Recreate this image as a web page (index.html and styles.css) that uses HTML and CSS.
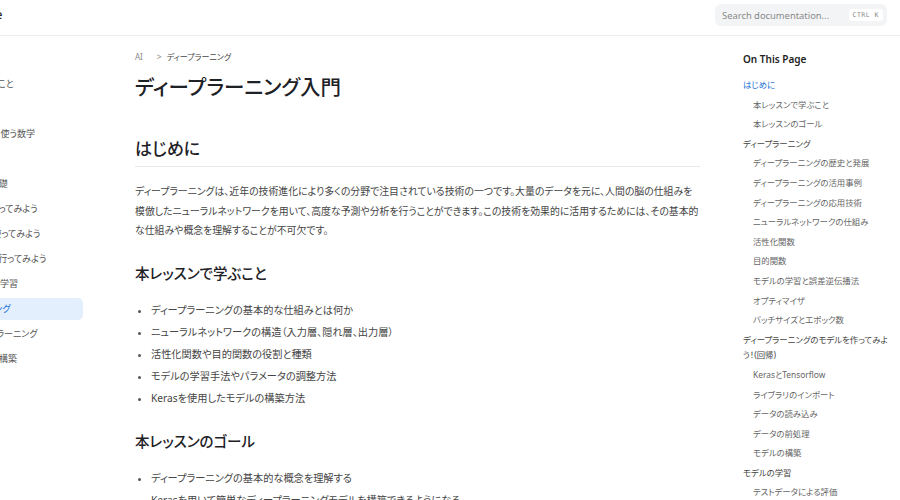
FILE: index.html
```html
<!DOCTYPE html>
<html lang="ja">
<head>
    <meta charset="UTF-8">
    <meta name="viewport" content="width=device-width, initial-scale=1.0">
    <title>ディープラーニング入門</title>
    <link rel="stylesheet" href="styles.css">
</head>
<body>
    <div class="page">
        <header class="topbar">
            <div class="brand">AI Note</div>
            <div class="search">
                <span class="search_text">Search documentation...</span>
                <kbd class="search_kbd">CTRL K</kbd>
            </div>
        </header>

        <div class="layout">
            <!-- Lesson list -->
            <nav class="sidebar">
                <a class="sidebar_item">はじめに</a>
                <a class="sidebar_item">本コースで学ぶこと</a>
                <a class="sidebar_item">AIとは</a>
                <a class="sidebar_item">機械学習で、よく使う数学</a>
                <a class="sidebar_item">Python入門</a>
                <a class="sidebar_item">データ分析の基礎</a>
                <a class="sidebar_item">Matplotlibを使ってみよう</a>
                <a class="sidebar_item">scikit-learnを使ってみよう</a>
                <a class="sidebar_item">データの分類を行ってみよう</a>
                <a class="sidebar_item">強化学習と深層学習</a>
                <a class="sidebar_item active">ディープラーニング</a>
                <a class="sidebar_item">実践的ディープラーニング</a>
                <a class="sidebar_item">生成AIモデルの構築</a>
                <a class="sidebar_item">まとめ</a>
            </nav>

            <main class="content">
                <div class="breadcrumb">
                    <span class="crumb">AI</span>
                    <span class="crumb_sep">&gt;</span>
                    <span class="crumb current">ディープラーニング</span>
                </div>
                <h1 class="title">ディープラーニング入門</h1>

                <h2 class="section_title">はじめに</h2>
                <p class="text">ディープラーニングは、近年の技術進化により多くの分野で注目されている技術の一つです。大量のデータを元に、人間の脳の仕組みを模倣したニューラルネットワークを用いて、高度な予測や分析を行うことができます。この技術を効果的に活用するためには、その基本的な仕組みや概念を理解することが不可欠です。</p>

                <h3 class="sub_title">本レッスンで学ぶこと</h3>
                <ul class="list">
                    <li>ディープラーニングの基本的な仕組みとは何か</li>
                    <li>ニューラルネットワークの構造（入力層、隠れ層、出力層）</li>
                    <li>活性化関数や目的関数の役割と種類</li>
                    <li>モデルの学習手法やパラメータの調整方法</li>
                    <li>Kerasを使用したモデルの構築方法</li>
                </ul>

                <h3 class="sub_title">本レッスンのゴール</h3>
                <ul class="list">
                    <li>ディープラーニングの基本的な概念を理解する</li>
                    <li>Kerasを用いて簡単なディープラーニングモデルを構築できるようになる</li>
                    <li>モデルの学習結果を評価し、改善する方法を身につける</li>
                </ul>
            </main>

            <!-- On this page -->
            <aside class="toc">
                <div class="toc_title">On This Page</div>
                <a class="toc_item active">はじめに</a>
                <a class="toc_item sub">本レッスンで学ぶこと</a>
                <a class="toc_item sub">本レッスンのゴール</a>
                <a class="toc_item">ディープラーニング</a>
                <a class="toc_item sub">ディープラーニングの歴史と発展</a>
                <a class="toc_item sub">ディープラーニングの活用事例</a>
                <a class="toc_item sub">ディープラーニングの応用技術</a>
                <a class="toc_item sub">ニューラルネットワークの仕組み</a>
                <a class="toc_item sub">活性化関数</a>
                <a class="toc_item sub">目的関数</a>
                <a class="toc_item sub">モデルの学習と誤差逆伝播法</a>
                <a class="toc_item sub">オプティマイザ</a>
                <a class="toc_item sub">バッチサイズとエポック数</a>
                <a class="toc_item">ディープラーニングのモデルを作ってみよう！(回帰)</a>
                <a class="toc_item sub">KerasとTensorflow</a>
                <a class="toc_item sub">ライブラリのインポート</a>
                <a class="toc_item sub">データの読み込み</a>
                <a class="toc_item sub">データの前処理</a>
                <a class="toc_item sub">モデルの構築</a>
                <a class="toc_item">モデルの学習</a>
                <a class="toc_item sub">テストデータによる評価</a>
            </aside>
        </div>
    </div>
</body>
</html>
```

FILE: styles.css
```css
html,
body {
    margin: 0;
    overflow: hidden;
}

body {
    font-family: 'Noto Sans', 'Noto Sans CJK JP', sans-serif;
    color: #333;
    background: #fff;
    font-feature-settings: "palt";
}

.page {
    width: 984px;
    margin-left: -84px;
}

/* Top bar */
.topbar {
    height: 36px;
    box-sizing: border-box;
    border-bottom: 1px solid #ececec;
    display: flex;
    justify-content: space-between;
    align-items: flex-start;
    padding: 4px 13px 0 43px;
}

.brand {
    font-size: 12px;
    font-weight: 500;
    line-height: 22px;
    color: #222;
}

.search {
    width: 172px;
    height: 22px;
    box-sizing: border-box;
    background: #f3f4f6;
    border-radius: 6px;
    display: flex;
    align-items: center;
    justify-content: space-between;
    padding: 0 4px 0 7px;
}

.search_text {
    font-size: 9.4px;
    color: #8a8a8a;
}

.search_kbd {
    font-family: 'DejaVu Sans Mono', monospace;
    font-size: 6.5px;
    color: #888;
    background: #fff;
    border-radius: 3px;
    padding: 2px 4px;
    letter-spacing: 0.5px;
}

/* Three columns */
.layout {
    display: grid;
    grid-template-columns: 167px 660px 157px;
}

.sidebar {
    display: flex;
    flex-direction: column;
    gap: 3px;
    padding: 12px 0 0 12px;
}

.sidebar_item {
    display: block;
    height: 22px;
    line-height: 22px;
    padding: 0 10px;
    border-radius: 5px;
    font-size: 9px;
    color: #555;
    white-space: nowrap;
}

.sidebar_item.active {
    background: #e4effd;
    color: #1b6fd6;
}

/* Article */
.content {
    padding: 13px 43px 0 52px;
}

.breadcrumb {
    display: flex;
    align-items: center;
    height: 14px;
    font-size: 8px;
    color: #888;
}

.crumb_sep {
    margin: 0 5px 0 14px;
    font-size: 8.5px;
}

.crumb.current {
    color: #444;
}

.title {
    margin: 9px 0 0;
    font-size: 20.5px;
    line-height: 30px;
    font-weight: 500;
    color: #1e2126;
}

.section_title {
    margin: 34px 0 0;
    padding-bottom: 4px;
    border-bottom: 1px solid #e8e8e8;
    font-size: 17px;
    line-height: 26px;
    font-weight: 500;
    color: #1e2126;
}

.text {
    margin: 15px 0 0;
    font-size: 9.9px;
    line-height: 19.5px;
    color: #444;
}

.sub_title {
    margin: 21px 0 0;
    font-size: 14.5px;
    line-height: 22px;
    font-weight: 500;
    color: #1e2126;
}

.list {
    margin: 15px 0 0;
    padding-left: 16px;
    font-size: 10.2px;
    line-height: 22px;
    color: #444;
}

.list li::marker {
    font-size: 9px;
    color: #555;
}

/* On this page */
.toc {
    padding: 16px 10px 0 0;
    display: flex;
    flex-direction: column;
}

.toc_title {
    height: 14px;
    line-height: 14px;
    font-size: 10px;
    font-weight: 600;
    color: #222;
    margin-bottom: 9px;
}

.toc_item {
    display: block;
    font-size: 8.4px;
    line-height: 15.6px;
    padding: 2px 0;
    color: #444;
}

.toc_item.sub {
    padding-left: 10px;
    color: #666;
}

.toc_item.active {
    color: #1b6fd6;
}
```
